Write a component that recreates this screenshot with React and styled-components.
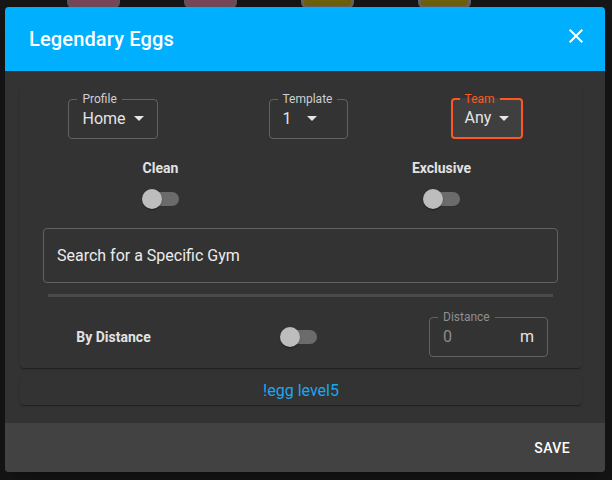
import React from 'react'
import styled, { createGlobalStyle } from 'styled-components'

const GlobalStyle = createGlobalStyle`
  *, *::before, *::after { box-sizing: border-box; }
  html, body { margin: 0; background: #181818; }
  body { font-family: Roboto, 'Liberation Sans', sans-serif; }
`

const Page = styled.div`
  position: relative;
  width: 612px;
  height: 480px;
  overflow: hidden;
`

// the egg cards of the page behind the dialog, only their bottoms show
const EggStrip = styled.div`
  display: flex;
  gap: 64px;
  padding-left: 67px;
`

const Egg = styled.div`
  width: 53px;
  height: 9px;
  border: 3px solid ${p => p.$rim};
  border-top: none;
  border-radius: 0 0 7px 7px;
  background: ${p => p.$fill};
`

const Dialog = styled.div`
  position: absolute;
  top: 7px;
  left: 5px;
  width: 600px;
  border-radius: 4px;
  overflow: hidden;
  background: #333;
  box-shadow: 0 11px 15px -7px rgba(0,0,0,.2), 0 24px 38px 3px rgba(0,0,0,.14), 0 9px 46px 8px rgba(0,0,0,.12);
`

const Header = styled.header`
  height: 64px;
  display: flex;
  align-items: center;
  justify-content: space-between;
  padding: 0 17px 0 24px;
  background: #00b0ff;
  color: #fff;
`

const Title = styled.h2`
  margin: 0;
  font-size: 20px;
  font-weight: 500;
  letter-spacing: 0.15px;
`

const CloseButton = styled.button`
  display: flex;
  width: 24px;
  height: 24px;
  margin-top: -6px;
  padding: 0;
  border: 0;
  background: none;
  color: #fff;
  cursor: pointer;
`

const Content = styled.div`
  display: flex;
  flex-direction: column;
  gap: 8px;
  padding: 15px 23px 18px 15px;
`

const Card = styled.section`
  display: flex;
  flex-direction: column;
  padding: 6px 0 11px;
  border-radius: 4px;
  background: #333;
  box-shadow: 0 2px 1px -1px rgba(0,0,0,.2), 0 1px 1px 0 rgba(0,0,0,.14), 0 1px 3px 0 rgba(0,0,0,.12);
`

const CommandCard = styled(Card)`
  height: 29px;
  padding: 0;
  align-items: center;
  justify-content: center;
  font-size: 16px;
  color: #1ea6ee;
`

const SelectRow = styled.div`
  display: grid;
  grid-template-columns: 186px 204px 154px;
  justify-items: center;
  align-items: start;
`

const ToggleRow = styled.div`
  display: grid;
  grid-template-columns: 1fr 1fr;
  margin-top: 19px;
`

const ToggleGroup = styled.div`
  display: flex;
  flex-direction: column;
  align-items: center;
  gap: 11px;
`

const BoldLabel = styled.span`
  font-size: 14px;
  font-weight: 700;
  line-height: 20px;
  color: #e2e2e2;
`

const Field = styled.fieldset`
  margin: 0;
  padding: 0;
  min-width: ${p => p.$minWidth || 0};
  border: ${p => (p.$focused ? '2px solid #ff5722' : '1px solid #626262')};
  border-radius: 4px;
  background: ${p => (p.$focused ? 'rgba(255,255,255,0.06)' : 'transparent')};
`

const Legend = styled.legend`
  margin-left: ${p => (p.$focused ? 7 : 8)}px;
  padding: 0 5px;
  font-size: 12px;
  line-height: 14px;
  color: ${p => (p.$focused ? '#ff5722' : p.$muted ? '#8f8f8f' : '#cfcfcf')};
`

const ValueRow = styled.div`
  display: flex;
  align-items: center;
  justify-content: ${p => (p.$spread ? 'space-between' : 'flex-start')};
  gap: 8px;
  height: ${p => (p.$focused ? 31 : 32)}px;
  padding: 0 ${p => (p.$focused ? 12 : 13)}px 7px ${p => (p.$focused ? 12 : 13)}px;
  font-size: 16px;
  line-height: 1;
  color: #e4e4e4;
`

const Value = styled.span`
  min-width: 16px;
  color: ${p => (p.$muted ? '#8c8c8c' : '#e4e4e4')};
`

const SwitchRoot = styled.span`
  position: relative;
  display: block;
  width: 37px;
  height: 20px;
  flex: none;
`

const SwitchTrack = styled.span`
  display: block;
  width: 34px;
  height: 14px;
  margin: 3px 0 0 3px;
  border-radius: 7px;
  background: #6b6b6b;
`

const SwitchThumb = styled.span`
  position: absolute;
  left: 0;
  top: 0;
  width: 20px;
  height: 20px;
  border-radius: 50%;
  background: #bdbdbd;
  box-shadow: 0 2px 1px -1px rgba(0,0,0,.2), 0 1px 1px 0 rgba(0,0,0,.14), 0 1px 3px 0 rgba(0,0,0,.12);
`

const SearchBox = styled.div`
  display: flex;
  align-items: center;
  height: 55px;
  margin: 19px 24px 0 23px;
  padding: 0 14px 0 13px;
  border: 1px solid #626262;
  border-radius: 4px;
  font-size: 16px;
  color: #ececec;
`

const Rail = styled.div`
  height: 3px;
  margin: 11px 29px 0 28px;
  background: #4a4a4a;
`

const DistanceRow = styled.div`
  display: grid;
  grid-template-columns: 187px 183px 1fr;
  align-items: end;
  margin-top: 13px;
`

const Cell = styled.div`
  display: flex;
  justify-content: center;
  align-items: center;
  height: 20px;
  margin-bottom: 10px;
`

const DistanceField = styled(Field)`
  justify-self: end;
  width: 119px;
  margin-right: 34px;
`

const Footer = styled.footer`
  display: flex;
  align-items: center;
  justify-content: flex-end;
  height: 49px;
  padding-right: 27px;
  background: #424242;
`

const SaveButton = styled.button`
  padding: 6px 8px;
  border: 0;
  background: none;
  font-family: inherit;
  font-size: 14px;
  font-weight: 500;
  letter-spacing: 0.4px;
  text-transform: uppercase;
  color: #fff;
  cursor: pointer;
`

const Caret = () => (
  <svg width="10" height="5" viewBox="7 10 10 5" fill="#e6e6e6">
    <path d="M7 10l5 5 5-5z" />
  </svg>
)

const Select = ({ label, value, focused, minWidth }) => (
  <Field $focused={focused} $minWidth={minWidth}>
    <Legend $focused={focused}>{label}</Legend>
    <ValueRow $focused={focused}>
      <Value>{value}</Value>
      <Caret />
    </ValueRow>
  </Field>
)

const Switch = () => (
  <SwitchRoot>
    <SwitchTrack />
    <SwitchThumb />
  </SwitchRoot>
)

const eggs = [
  { fill: '#7f4a5e', rim: '#6a5660' },
  { fill: '#7f4a5e', rim: '#6a5660' },
  { fill: '#74650c', rim: '#686868' },
  { fill: '#74650c', rim: '#686868' },
]

export default function App() {
  return (
    <Page>
      <GlobalStyle />
      <EggStrip>
        {eggs.map((e, i) => <Egg key={i} $fill={e.fill} $rim={e.rim} />)}
      </EggStrip>
      <Dialog>
        <Header>
          <Title>Legendary Eggs</Title>
          <CloseButton aria-label="close">
            <svg width="24" height="24" viewBox="0 0 24 24" fill="currentColor">
              <path d="M19 6.41 17.59 5 12 10.59 6.41 5 5 6.41 10.59 12 5 17.59 6.41 19 12 13.41 17.59 19 19 17.59 13.41 12z" />
            </svg>
          </CloseButton>
        </Header>
        <Content>
          <Card>
            <SelectRow>
              <Select label="Profile" value="Home" />
              <Select label="Template" value="1" minWidth="79px" />
              <Select label="Team" value="Any" focused />
            </SelectRow>
            <ToggleRow>
              <ToggleGroup>
                <BoldLabel>Clean</BoldLabel>
                <Switch />
              </ToggleGroup>
              <ToggleGroup>
                <BoldLabel>Exclusive</BoldLabel>
                <Switch />
              </ToggleGroup>
            </ToggleRow>
            <SearchBox>Search for a Specific Gym</SearchBox>
            <Rail />
            <DistanceRow>
              <Cell><BoldLabel>By Distance</BoldLabel></Cell>
              <Cell><Switch /></Cell>
              <DistanceField>
                <Legend $muted>Distance</Legend>
                <ValueRow $spread>
                  <Value $muted>0</Value>
                  <span>m</span>
                </ValueRow>
              </DistanceField>
            </DistanceRow>
          </Card>
          <CommandCard>!egg level5</CommandCard>
        </Content>
        <Footer>
          <SaveButton>Save</SaveButton>
        </Footer>
      </Dialog>
    </Page>
  )
}
